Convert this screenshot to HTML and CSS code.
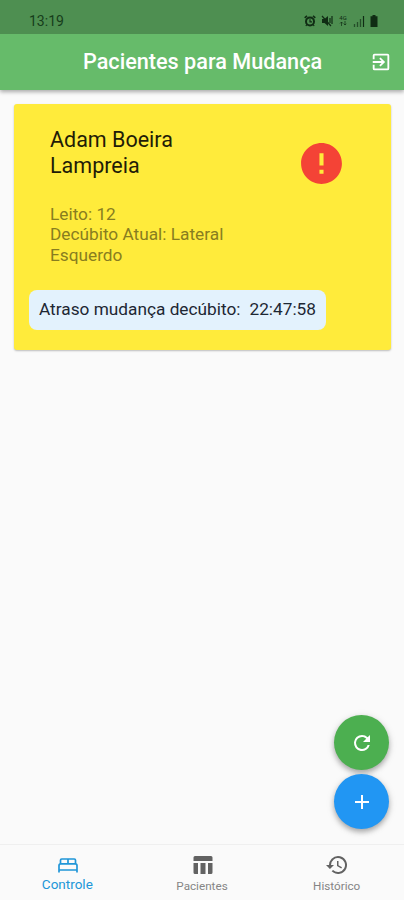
FILE: index.html
```html
<!DOCTYPE html>
<html lang="pt-BR">
<head>
<meta charset="utf-8">
<title>Pacientes para Mudança</title>
<link rel="stylesheet" href="styles.css">
</head>
<body>
<div class="app">
  <header class="top">
    <div class="status">
      <span class="clock">13:19</span>
      <div class="status-icons">
        <svg width="12" height="12" viewBox="0 0 12 12"><path d="M.7 2.8 3 .8M11.300 2.800 9 .8" fill="none" stroke="currentColor" stroke-width="1.600"/><circle cx="6" cy="6.500" r="4" fill="none" stroke="currentColor" stroke-width="2"/><path d="M6 4.200v2.600h2M3 9.500 1.800 11M9 9.500l1.200 1.500" fill="none" stroke="currentColor" stroke-width="1.200"/></svg>
        <svg width="12" height="12" viewBox="0 0 12 12"><path d="M1 4h2.500L7 1v10L3.500 8H1z" fill="currentColor"/><path d="M1 1l9 10M9 3v5M11 1v8" fill="none" stroke="currentColor" stroke-width="1.200"/></svg>
        <span class="network"><span>4G</span><svg width="8" height="5" viewBox="0 0 8 5"><path d="M2.500 5V1M1 2.500 2.500 1 4 2.500M6 0v4M4.800 2.800 6 4l1.300-1.200" fill="none" stroke="currentColor" stroke-width=".7"/></svg></span>
        <svg width="12" height="12" viewBox="0 0 12 12"><path d="M1.500 9v3M4.500 7v5M7.500 4v8" stroke="currentColor" stroke-width="1.300" opacity=".65"/><path d="M10.500 1v11" stroke="currentColor" stroke-width="1.200"/></svg>
        <svg class="battery" width="8" height="12" viewBox="0 0 8 12"><path d="M2.500 0h3v1.300H7.500V12H.5V1.300h2z" fill="currentColor"/></svg>
      </div>
    </div>
    <div class="bar">
      <h1>Pacientes para Mudança</h1>
      <svg class="exit" width="22" height="22" viewBox="0 0 24 24" fill="#fff"><path d="M10.090 15.590 11.500 17l5-5-5-5-1.410 1.410L12.670 11H3v2h9.670l-2.580 2.590zM19 3H5a2 2 0 0 0-2 2v4h2V5h14v14H5v-4H3v4a2 2 0 0 0 2 2h14a2 2 0 0 0 2-2V5a2 2 0 0 0-2-2z"/></svg>
    </div>
  </header>
  <main>
    <article class="card">
      <div class="patient">
        <div>
          <h2>Adam Boeira<br>Lampreia</h2>
          <p>Leito: 12<br>Decúbito Atual: Lateral<br>Esquerdo</p>
        </div>
        <svg class="alert" width="49" height="49" viewBox="0 0 24 24"><path fill="#f44336" d="M12 2C6.480 2 2 6.480 2 12s4.480 10 10 10 10-4.480 10-10S17.520 2 12 2zm1 15h-2v-2h2v2zm0-4h-2V7h2v6z"/></svg>
      </div>
      <div class="delay"><span>Atraso mudança decúbito:</span><span>22:47:58</span></div>
    </article>
  </main>
  <div class="fabs">
    <button class="fab refresh" aria-label="Atualizar"><svg width="24" height="24" viewBox="0 0 24 24" fill="#fff"><path d="M17.650 6.350A7.960 7.960 0 0 0 12 4a8 8 0 1 0 7.730 10h-2.080A6 6 0 1 1 12 6c1.660 0 3.140.69 4.220 1.780L13 11h7V4l-2.350 2.350z"/></svg></button>
    <button class="fab add" aria-label="Adicionar"><svg width="24" height="24" viewBox="0 0 24 24" fill="#fff"><path d="M19 13h-6v6h-2v-6H5v-2h6V5h2v6h6v2z"/></svg></button>
  </div>
  <nav>
    <a class="tab active"><svg width="24" height="24" viewBox="0 0 24 24" fill="none" stroke="currentColor" stroke-width="1.700"><path d="M3 19.500V12.500c0-1 .6-1.700 1.600-1.700h14.800c1 0 1.600.7 1.600 1.700v7M3 17h18M4.500 10.800V7.200c0-.8.500-1.200 1.200-1.200h12.600c.7 0 1.200.4 1.200 1.200v3.600M12 6v4.800"/></svg><span>Controle</span></a>
    <a class="tab"><svg width="24" height="24" viewBox="0 0 24 24" fill="currentColor"><path d="M2.500 4.500a1.500 1.500 0 0 1 1.500-1.500h16a1.500 1.500 0 0 1 1.500 1.500V8h-19zM2.500 10H7v11H4a1.500 1.500 0 0 1-1.500-1.500zM9.500 10h5v11h-5zM17 10h4.500v9.500A1.500 1.500 0 0 1 20 21h-3z"/></svg><span>Pacientes</span></a>
    <a class="tab"><svg width="24" height="24" viewBox="0 0 24 24" fill="currentColor"><path d="M13 3a9 9 0 0 0-9 9H1l3.890 3.890.07.14L9 12H6a7 7 0 1 1 2.060 4.940l-1.420 1.420A9 9 0 1 0 13 3zm-1 5v5l4.280 2.540.72-1.210-3.500-2.080V8H12z"/></svg><span>Histórico</span></a>
  </nav>
</div>
</body>
</html>
```
FILE: styles.css
```css
* { box-sizing: border-box; }
body { margin: 0; font-family: Roboto, sans-serif; background: #fafafa; }
.app { position: relative; display: flex; flex-direction: column; width: 404px; height: 900px; overflow: hidden; }
.top { height: 90px; background: #66bb6a; box-shadow: 0 2px 4px rgba(0,0,0,.32); }
.status { height: 34px; padding: 7px 26px 0 29px; background: #4e8f51; color: #163d1b; display: flex; justify-content: space-between; align-items: center; }
.clock { font-size: 14px; }
.status-icons { display: flex; align-items: center; gap: 5px; color: #102c14; }
.network { display: flex; flex-direction: column; align-items: center; width: 10px; font-size: 6px; line-height: 6px; }
.bar { height: 56px; display: flex; align-items: center; justify-content: space-between; padding: 0 12px 0 83px; }
h1 { margin: 0 0 1px; font-size: 21.650px; font-weight: 500; color: #fff; white-space: nowrap; }
main { flex: 1; padding: 14px 13px 0 14px; }
.card { height: 246px; padding: 23px 15px 0; background: #ffeb3b; border-radius: 3px; box-shadow: 0 1px 2px rgba(0,0,0,.25); }
.patient { display: flex; justify-content: space-between; height: 163px; padding: 0 30px 0 21px; }
h2 { margin: 0; font-size: 21.500px; line-height: 26px; font-weight: 400; color: #1f1c07; }
p { margin: 25px 0 0; font-size: 17.250px; line-height: 20.400px; color: #887d20; }
.alert { margin-top: 12px; }
.delay { display: flex; align-items: center; justify-content: space-between; width: 297px; height: 40px; padding: 0 10px 2px; border-radius: 8px; background: #e3f2fd; color: #1d2733; font-size: 17.250px; white-space: nowrap; }
.fabs { position: absolute; right: 15px; bottom: 71px; display: flex; flex-direction: column; gap: 4px; }
.fab { width: 55px; height: 55px; padding: 0; border: 0; border-radius: 50%; display: flex; align-items: center; justify-content: center; box-shadow: 0 3px 5px rgba(0,0,0,.25), 0 2px 8px rgba(0,0,0,.13); }
.refresh { background: #4caf50; }
.add { background: #2196f3; }
nav { height: 56px; display: flex; border-top: 1px solid #efefef; background: #fafafa; }
.tab { flex: 1; display: flex; flex-direction: column; align-items: center; padding-top: 8px; color: #626262; }
.tab svg { margin-left: 1px; }
.tab span { margin-top: 2px; font-size: 11.700px; line-height: 14px; color: #858585; }
.tab.active { color: #2196d8; }
.tab.active span { margin-top: 0; font-size: 13.500px; color: #2196d8; }
```
